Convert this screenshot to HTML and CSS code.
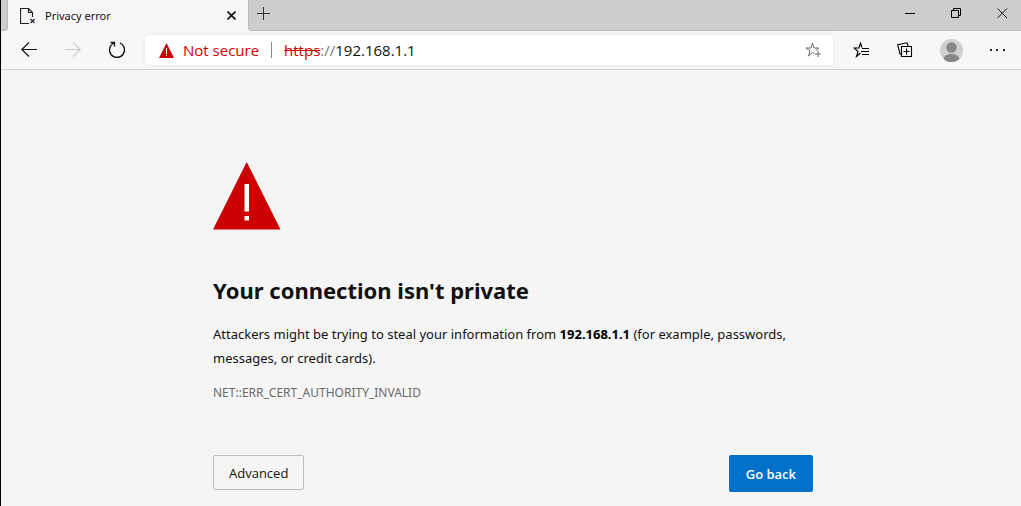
FILE: index.html
```html
<!DOCTYPE html>
<html lang="en">
<head>
<meta charset="utf-8">
<meta name="viewport" content="width=device-width, initial-scale=1">
<title>Privacy error</title>
<link rel="stylesheet" href="styles.css">
</head>
<body>
<div class="browser">
  <header class="tab-strip">
    <div class="strip-start"></div>
    <div class="tab">
      <svg class="tab-icon" width="16" height="18" viewBox="0 0 16 18" fill="none" stroke="#222" aria-hidden="true">
        <path d="M9 16.500H.5V1.500H8.500L12.500 5.500V10M8.500 1.500V5.500H12.500" stroke-width="1.200"/>
        <path d="M10.500 12l4 4M14.500 12l-4 4" stroke-width="1.200"/>
      </svg>
      <span class="tab-title">Privacy error</span>
      <button class="tab-close" type="button" aria-label="Close tab">
        <svg width="9" height="9" viewBox="0 0 9 9" stroke="#111" stroke-width="1.600"><path d="M.5 .5l8 8M8.500 .5l-8 8"/></svg>
      </button>
    </div>
    <div class="strip-rest">
      <button class="new-tab" type="button" aria-label="New tab">
        <svg width="13" height="13" viewBox="0 0 13 13" stroke="#333"><path d="M6.500 0v13M0 6.500h13"/></svg>
      </button>
      <div class="window-controls">
        <button type="button" aria-label="Minimize"><svg width="11" height="11" viewBox="0 0 11 11" stroke="#000"><path d="M0 5.500h10"/></svg></button>
        <button type="button" aria-label="Restore"><svg width="11" height="11" viewBox="0 0 11 11" fill="none" stroke="#000"><path d="M.5 2.500h7v7H.5zM2.500 2.500V.5h7v7H7.500"/></svg></button>
        <button type="button" aria-label="Close"><svg width="11" height="11" viewBox="0 0 11 11" stroke="#111"><path d="M.5 .5l9.500 9.500M10 .5l-9.500 9.500"/></svg></button>
      </div>
    </div>
  </header>

  <nav class="toolbar" aria-label="Navigation">
    <button class="tool" type="button" aria-label="Back">
      <svg width="16" height="16" viewBox="0 0 16 16" fill="none" stroke="#111" stroke-width="1.200"><path d="M8 .5L.8 7.500L8 14.500M.8 7.500H16"/></svg>
    </button>
    <button class="tool" type="button" aria-label="Forward" disabled>
      <svg width="16" height="16" viewBox="0 0 16 16" fill="none" stroke="#ccc" stroke-width="1.200"><path d="M8 .5L15.200 7.500L8 14.500M15.200 7.500H0"/></svg>
    </button>
    <button class="tool" type="button" aria-label="Refresh">
      <svg width="18" height="18" viewBox="0 0 18 18" fill="none" stroke="#111" stroke-width="1.300"><path d="M12 2A7.500 7.500 0 1 1 6 2M2.500 1.500H6.500V5.500"/></svg>
    </button>
    <div class="address-bar">
      <svg width="15" height="15" viewBox="0 0 15 15" aria-hidden="true"><path fill="#c00" d="M7.500 0L15 15H0z"/><path fill="#fff" d="M7 5h1v6H7zM7 12h1v1H7z"/></svg>
      <span class="not-secure">Not secure</span>
      <span class="divider"></span>
      <span class="url"><s>https</s><span class="slashes">://</span>192.168.1.1</span>
      <button class="favorite" type="button" aria-label="Add to favorites">
        <svg width="16" height="16" viewBox="0 0 16 16" fill="none" stroke="#666"><path d="M9.500 11.200L7.500 10.500L3.500 14L5 9L1 6H6L7.500 1L9 6H14L11 8.500M13 9v6M10 12h6"/></svg>
      </button>
    </div>
    <div class="actions">
      <button type="button" aria-label="Favorites">
        <svg width="17" height="16" viewBox="0 0 17 16" fill="none" stroke="#000" stroke-width="1.100"><path d="M7.500 11L3.500 14.500L5 9.500L1 6H6L7.500 1L9 5.500M9 6.500h7M8 9.500h8M9 12.500h7"/></svg>
      </button>
      <button type="button" aria-label="Collections">
        <svg width="16" height="16" viewBox="0 0 16 16" fill="none" stroke="#000" stroke-width="1.100"><path d="M4.500 4.500h10v10h-10zM9.500 6.500v6M6.500 9.500h6M4.500 12.500L3 12L.7 2.700L10 .8L11 4"/></svg>
      </button>
      <button type="button" aria-label="Profile">
        <svg width="23" height="23" viewBox="0 0 23 23"><defs><clipPath id="avatar-clip"><circle cx="11.500" cy="11.500" r="11.500"/></clipPath></defs><circle cx="11.500" cy="11.500" r="11.500" fill="#d2d0ce"/><g fill="#8a8886" clip-path="url(#avatar-clip)"><circle cx="11.500" cy="8.500" r="5.200"/><ellipse cx="11.500" cy="20" rx="8" ry="5"/></g></svg>
      </button>
      <button type="button" aria-label="Settings and more">
        <svg width="15" height="3" viewBox="0 0 15 3" fill="#222"><path d="M0 0h2v2H0zM6 0h2v2H6zM13 0h2v2h-2z"/></svg>
      </button>
    </div>
  </nav>

  <main class="page">
    <div class="interstitial">
      <svg class="warning" width="68" height="68" viewBox="0 0 68 68" role="img" aria-label="Warning"><path fill="#c00" d="M33.700 0L67.500 67.500H0z"/><path fill="#fff" d="M31.500 22h4.500v27.500h-4.500zM31.500 54h4.500v4.500h-4.500z"/></svg>
      <h1>Your connection isn't private</h1>
      <p class="message">Attackers might be trying to steal your information from <strong>192.168.1.1</strong> (for example, passwords, messages, or credit cards).</p>
      <p class="error-code">NET::ERR_CERT_AUTHORITY_INVALID</p>
      <div class="buttons">
        <button class="advanced" type="button">Advanced</button>
        <button class="go-back" type="button">Go back</button>
      </div>
    </div>
  </main>
</div>
</body>
</html>
```

FILE: styles.css
```css
* {
  box-sizing: border-box;
}

body {
  margin: 0;
  background: #f5f5f5;
  color: #111;
  font-family: "Open Sans", "Noto Sans", sans-serif;
}

button {
  margin: 0;
  padding: 0;
  border: 0;
  background: none;
  color: inherit;
  font: inherit;
}

svg {
  display: block;
}

.browser {
  min-height: 100vh;
  border-left: 1px solid #000;
}

.tab-strip {
  display: flex;
  height: 31px;
  background: #f7f7f7;
}

.strip-start,
.strip-rest {
  background: #cdcdcd;
  border-bottom: 1px solid #bababa;
}

.strip-start {
  width: 7px;
  border-right: 1px solid #bababa;
  border-bottom-right-radius: 4px;
}

.tab {
  display: flex;
  align-items: center;
  width: 240px;
  padding: 0 12px;
}

.tab-title {
  flex: 1;
  margin-left: 9px;
  font-family: "Noto Sans", "Open Sans", sans-serif;
  font-size: 11px;
  line-height: 16px;
}

.tab-icon {
  flex: none;
}

.strip-rest {
  display: flex;
  flex: 1;
  justify-content: space-between;
  padding: 0 13px 4px 8px;
  border-left: 1px solid #bababa;
  border-bottom-left-radius: 4px;
}

.new-tab,
.window-controls,
.window-controls button {
  display: flex;
  align-items: center;
}

.window-controls {
  gap: 35px;
}

.toolbar {
  display: flex;
  align-items: center;
  height: 39px;
  padding: 0 16px 0 8px;
  background: #f7f7f7;
  border-bottom: 1px solid #d0d0d0;
}

.tool {
  display: grid;
  place-items: center;
  width: 40px;
  height: 30px;
  margin-right: 4px;
}

.address-bar {
  display: flex;
  flex: 1;
  align-items: center;
  height: 30px;
  margin-left: 4px;
  padding: 0 12px 0 14px;
  border-radius: 4px;
  background: #fff;
  box-shadow: 0 0 4px #e4e4e4;
  font-size: 15px;
  line-height: 20px;
}

.not-secure {
  margin-left: 9px;
  color: #c00;
}

.divider {
  width: 1px;
  height: 16px;
  margin: 0 12px;
  background: #888;
}

.url {
  flex: 1;
}

.url s {
  color: #c00;
}

.slashes {
  color: #777;
}

.actions {
  display: flex;
  align-items: center;
  gap: 27px;
  margin-left: 20px;
}

.page {
  padding: 92px 20px 14px 24px;
}

.interstitial {
  max-width: 600px;
  margin: 0 auto;
  font-family: "Noto Sans", "Open Sans", sans-serif;
}

h1 {
  margin: 44px 0 16px;
  font-size: 22px;
  font-weight: 700;
  line-height: 32px;
}

.message {
  margin: 0;
  font-size: 13px;
  line-height: 24px;
}

.message strong {
  color: #000;
}

.error-code {
  margin: 11px 0 0;
  color: #6a6a6a;
  font-size: 12px;
  line-height: 24px;
}

.buttons {
  display: flex;
  align-items: flex-start;
  justify-content: space-between;
  margin-top: 50px;
}

.advanced,
.go-back {
  border-radius: 2px;
  font-family: "Open Sans", "Noto Sans", sans-serif;
  font-size: 13px;
  line-height: 20px;
}

.advanced {
  padding: 7px 15px 6px;
  border: 1px solid #bebebe;
}

.go-back {
  padding: 9px 17px 8px;
  background: #0070c9;
  color: #fff;
  font-weight: 600;
}
```
